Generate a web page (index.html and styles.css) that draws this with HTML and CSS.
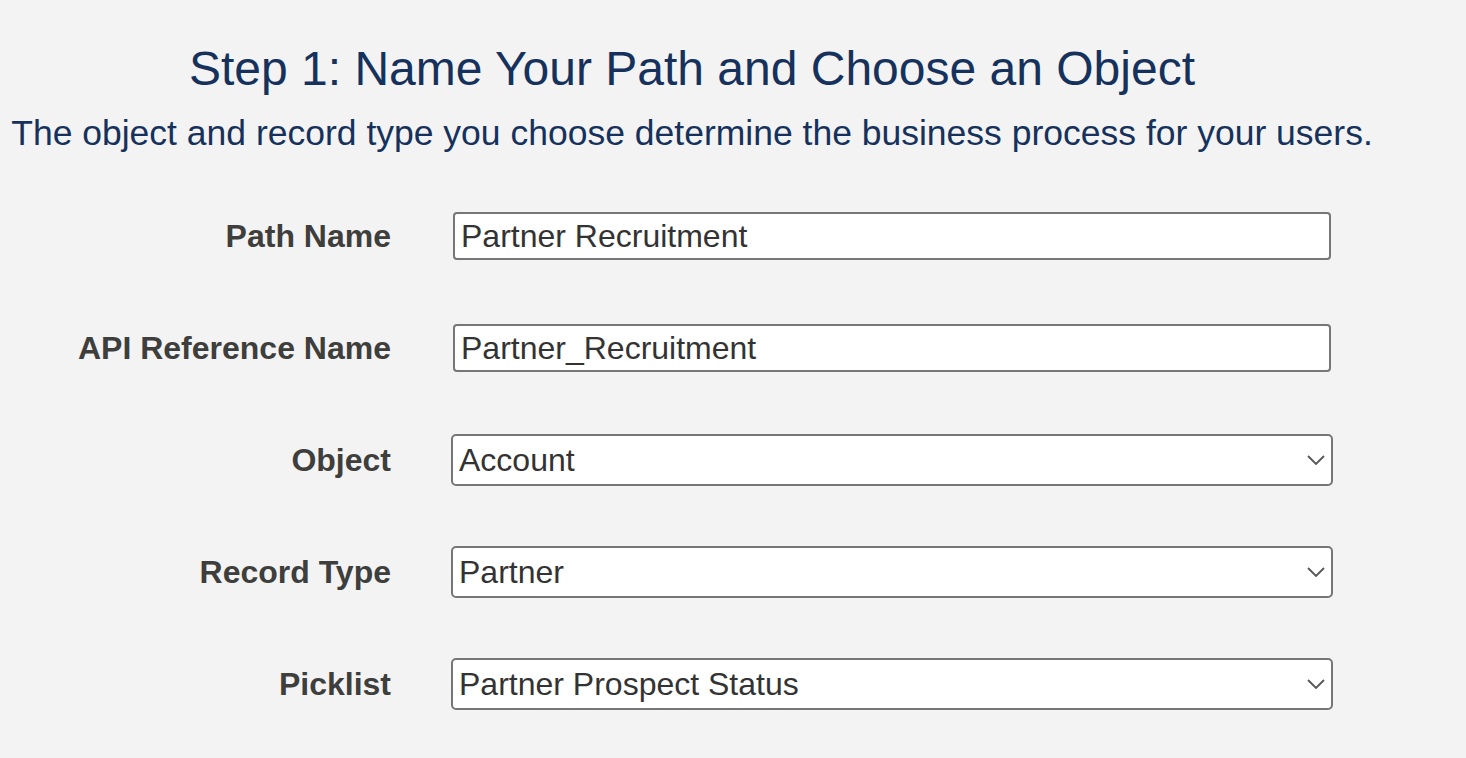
FILE: index.html
```html
<!DOCTYPE html>
<html>
<head>
<meta charset="utf-8">
<link rel="stylesheet" href="styles.css">
</head>
<body>
<div class="page">
  <h1 class="title">Step 1: Name Your Path and Choose an Object</h1>
  <p class="subtitle">The object and record type you choose determine the business process for your users.</p>
  <div class="form">
    <label class="label">Path Name</label>
    <div class="field"><input class="text-input" type="text" value="Partner Recruitment"></div>

    <label class="label">API Reference Name</label>
    <div class="field"><input class="text-input" type="text" value="Partner_Recruitment"></div>

    <label class="label">Object</label>
    <div class="field select-wrap">
      <select class="select"><option>Account</option></select>
      <svg class="chevron" width="18" height="10" viewBox="0 0 18 10"><path d="M1 1 L9 9 L17 1" fill="none" stroke="#555" stroke-width="1.8"/></svg>
    </div>

    <label class="label">Record Type</label>
    <div class="field select-wrap">
      <select class="select"><option>Partner</option></select>
      <svg class="chevron" width="18" height="10" viewBox="0 0 18 10"><path d="M1 1 L9 9 L17 1" fill="none" stroke="#555" stroke-width="1.8"/></svg>
    </div>

    <label class="label">Picklist</label>
    <div class="field select-wrap">
      <select class="select"><option>Partner Prospect Status</option></select>
      <svg class="chevron" width="18" height="10" viewBox="0 0 18 10"><path d="M1 1 L9 9 L17 1" fill="none" stroke="#555" stroke-width="1.8"/></svg>
    </div>
  </div>
</div>
</body>
</html>
```

FILE: styles.css
```css
html, body {
  margin: 0;
  padding: 0;
  background: #f3f3f3;
  font-family: "Liberation Sans", Arial, sans-serif;
}
.page {
  width: 1384px;
  padding-top: 41px;
}
.title {
  margin: 0;
  font-size: 48px;
  line-height: 56px;
  font-weight: normal;
  color: #16325c;
  text-align: center;
}
.subtitle {
  margin: 16px 0 0 0;
  font-size: 35.5px;
  line-height: 40px;
  color: #16325c;
  text-align: center;
  white-space: nowrap;
}
.form {
  margin-top: 57px;
  display: grid;
  grid-template-columns: 391px 882px;
  column-gap: 60px;
  row-gap: 60px;
  align-items: center;
}
.label {
  text-align: right;
  font-weight: bold;
  font-size: 32px;
  color: #3e3e3c;
}
.field {
  height: 52px;
  display: flex;
  align-items: center;
}
.text-input {
  box-sizing: border-box;
  width: 878px;
  height: 48px;
  margin: 0 2px;
  border: 2px solid #767676;
  border-radius: 4px;
  background: #fff;
  padding: 0 6px;
  font-family: "Liberation Sans", Arial, sans-serif;
  font-size: 32px;
  color: #333;
  outline: none;
}
.select-wrap {
  position: relative;
}
.select {
  appearance: none;
  -webkit-appearance: none;
  box-sizing: border-box;
  width: 882px;
  height: 52px;
  border: 2px solid #767676;
  border-radius: 5px;
  background: #fff;
  padding: 0 6px;
  font-family: "Liberation Sans", Arial, sans-serif;
  font-size: 32px;
  color: #333;
  outline: none;
}
.chevron {
  position: absolute;
  right: 8px;
  top: 21px;
  pointer-events: none;
}
```
